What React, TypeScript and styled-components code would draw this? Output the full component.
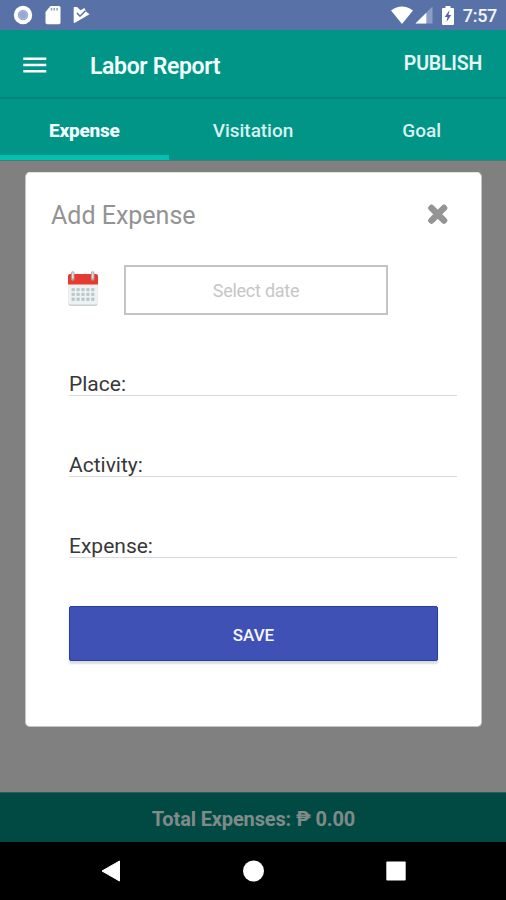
import React from "react";
import styled, { createGlobalStyle } from "styled-components";

const GlobalStyle = createGlobalStyle`
  * { box-sizing: border-box; }
  body { margin: 0; font-family: Roboto, "Liberation Sans", sans-serif; }
  button { font-family: inherit; border: 0; padding: 0; background: none; }
  svg { display: block; flex: none; }
`;

const Screen = styled.div`
  width: 506px;
  height: 900px;
  display: flex;
  flex-direction: column;
  overflow: hidden;
  background: #808080;
`;

const StatusBar = styled.header`
  height: 30px;
  flex: none;
  display: flex;
  justify-content: space-between;
  padding: 0 9px 0 13px;
  background: #5872a8;
`;

const StatusGroup = styled.div`
  display: flex;
  align-items: center;
`;

const NotificationIcons = styled(StatusGroup)`
  gap: 12px;
`;

const SystemIcons = styled(StatusGroup)`
  & > svg:nth-child(2) { margin-left: 2px; }
  & > svg:nth-child(3) { margin-left: 9px; }
`;

const Clock = styled.span`
  margin-left: 9px;
  padding-top: 2px;
  font-size: 18px;
  line-height: 30px;
  font-weight: 500;
  letter-spacing: -0.3px;
  color: #f4f6fb;
`;

const AppBar = styled.div`
  height: 69px;
  flex: none;
  display: flex;
  align-items: center;
  padding: 2px 24px 0 23px;
  background: #009587;
  border-bottom: 2px solid #00857a;
`;

const Title = styled.h1`
  margin: 4px 0 0 43px;
  flex: 1;
  font-size: 23px;
  line-height: 28px;
  font-weight: 600;
  letter-spacing: -0.35px;
  color: #f2fffd;
`;

const PublishButton = styled.button`
  margin-top: -1px;
  font-size: 19.5px;
  line-height: 24px;
  font-weight: 600;
  letter-spacing: -0.2px;
  color: #e4f6f3;
`;

const Tabs = styled.nav`
  height: 62px;
  flex: none;
  display: grid;
  grid-template-columns: repeat(3, 1fr);
  background: #009587;
  border-bottom: 1px solid #4c7a75;
`;

const Tab = styled.button<{ $active?: boolean }>`
  padding-top: 7px;
  border-bottom: 5px solid ${(p) => (p.$active ? "#00c2b3" : "transparent")};
  font-size: 19px;
  font-weight: ${(p) => (p.$active ? 800 : 500)};
  letter-spacing: ${(p) => (p.$active ? "-0.2px" : "-0.05px")};
  color: ${(p) => (p.$active ? "#f4fffe" : "#d9f1ee")};
`;

const Content = styled.main`
  flex: 1;
  padding: 11px 24px 0 25px;
`;

const Dialog = styled.section`
  height: 555px;
  border-radius: 5px;
  background: #fff;
  border: 1px solid #c4c4c4;
  border-top-color: #e4e4e4;
  padding: 0 24px 0 25px;
  display: flex;
  flex-direction: column;
`;

const DialogHeader = styled.div`
  display: flex;
  justify-content: space-between;
  align-items: center;
  height: 84px;
  padding-right: 8px;
`;

const DialogTitle = styled.h2`
  margin: 0;
  font-size: 25px;
  font-weight: 400;
  color: #939393;
`;

const DateRow = styled.div`
  display: flex;
  align-items: center;
  gap: 25px;
  margin: 8px 0 0 16px;

  & > svg { margin-bottom: 2px; }
`;

const DateInput = styled.button`
  width: 264px;
  height: 50px;
  border: 2px solid #c4c4c4;
  padding-top: 1px;
  font-size: 18px;
  letter-spacing: -0.25px;
  color: #c6c6c6;
`;

const Fields = styled.div`
  margin: 46px 0 0 18px;
`;

const Field = styled.label`
  display: flex;
  align-items: flex-end;
  height: 35px;
  margin-bottom: 46px;
  border-bottom: 1px solid #dadada;
  font-size: 21px;
  line-height: 22px;
  color: #383838;
`;

const SaveButton = styled.button`
  width: 369px;
  height: 55px;
  margin: 2px 0 0 18px;
  padding-top: 2px;
  border: 1px solid #2340a3;
  border-radius: 2px;
  background: #4051b5;
  box-shadow: 0 3px 2px rgba(0, 0, 0, 0.14);
  font-size: 17px;
  font-weight: 550;
  color: #f6f6ff;
`;

const TotalBar = styled.footer`
  height: 50px;
  flex: none;
  display: flex;
  align-items: center;
  justify-content: center;
  padding: 2px 0 0 1px;
  background: #004a43;
  border-top: 1px solid #2a5e58;
  font-size: 20px;
  font-weight: 700;
  letter-spacing: -0.14px;
  color: #808a89;
`;

const NavBar = styled.div`
  height: 58px;
  flex: none;
  display: flex;
  align-items: center;
  justify-content: space-between;
  padding: 0 100px 0 101px;
  background: #000;
`;

const RecordIcon = () => (
  <svg width="20" height="20" viewBox="0 0 20 20">
    <circle cx="10" cy="10" r="9.2" fill="#fff" />
    <circle cx="10" cy="10" r="5.2" fill="#98a8d3" />
    <circle cx="10" cy="10" r="4" fill="none" stroke="#a9b7dc" />
  </svg>
);

const SdCardIcon = () => (
  <svg width="16" height="20" viewBox="0 0 16 20">
    <path d="M5.5 1H14q1.5 0 1.5 1.5v15q0 1.7-1.5 1.7H2q-1.5 0-1.5-1.7V7z" fill="#fff" />
    <path d="M6.5 3v2.5M9.3 3v2.5M12.1 3v2.5" stroke="#8d9dc6" strokeWidth="1.5" />
  </svg>
);

const PlayCheckIcon = () => (
  <svg width="17" height="18" viewBox="0 0 17 18">
    <path d="M1 1h3l3.5 3.2L11.5 2l1.5 3.6 3.5 2.6L1.5 17Q.7 17 .7 16V1.5z" fill="#fff" />
    <path d="M4 7l3 3.2 5.5-5.4" fill="none" stroke="#5872a8" strokeWidth="1.6" />
  </svg>
);

const WifiIcon = () => (
  <svg width="22" height="18" viewBox="0 0 22 18">
    <path d="M0 4.4Q11-3.2 22 4.4L11 18z" fill="#fff" />
  </svg>
);

const SignalIcon = () => (
  <svg width="18" height="18" viewBox="0 0 18 18">
    <path d="M17.5.5v17H.5z" fill="#8c9ec6" />
    <path d="M11.3 6.7v10.8H.5z" fill="#fff" />
  </svg>
);

const BatteryIcon = () => (
  <svg width="12" height="19" viewBox="0 0 12 19">
    <path d="M3.5 0h5v2H11q1 0 1 1v15q0 1-1 1H1q-1 0-1-1V3q0-1 1-1h2.5z" fill="#fff" />
    <path d="M7.5 4L2.7 11h2.8l-1 5 4.8-7H6.5z" fill="#5265a0" />
  </svg>
);

const MenuIcon = () => (
  <svg width="24" height="18" viewBox="0 0 24 18">
    <path d="M.3 2.8h23M.3 9h23M.3 15.2h23" stroke="#fff" strokeWidth="2.6" />
  </svg>
);

const CloseIcon = () => (
  <svg width="22" height="22" viewBox="0 0 22 22">
    <path d="M4.5 4L17 16.500M17 4L4.500 16.500" stroke="#949494" strokeWidth="5" strokeLinecap="square" />
    <path d="M4.500 4L17 16.500M17 4L4.500 16.500" stroke="#949494" strokeWidth="6.400" strokeLinecap="round" />
  </svg>
);

const dotRows = [18.5, 23.3, 28.1];
const dotColumns = [5.5, 10.4, 15.3, 20.2, 25.1];

const CalendarIcon = () => (
  <svg width="32" height="36" viewBox="0 0 32 36">
    <path d="M1.5 12h29v21q0 2-2 2h-25q-2 0-2-2z" fill="#cbd0d2" />
    <path d="M1.5 12h29v19.5q0 2-2 2h-25q-2 0-2-2z" fill="#eff2f3" />
    <path d="M1 13.5V5q0-2 2-2h26q2 0 2 2v8.5z" fill="#e43c30" />
    <path d="M5.8 2v6M25.7 2v6" stroke="#b69ea0" strokeWidth="3.4" strokeLinecap="round" />
    <path d="M5.8 2v5M25.7 2v5" stroke="#dce0e2" strokeWidth="1.6" strokeLinecap="round" />
    {dotRows.map((y) =>
      dotColumns.map((x) => (
        <rect key={`${x}-${y}`} x={x - 1} y={y - 1.6} width="3.4" height="3.4" rx="1" fill="#bdc9ce" />
      ))
    )}
  </svg>
);

export default function App() {
  return (
    <>
      <GlobalStyle />
      <Screen>
        <StatusBar>
          <NotificationIcons>
            <RecordIcon />
            <SdCardIcon />
            <PlayCheckIcon />
          </NotificationIcons>
          <SystemIcons>
            <WifiIcon />
            <SignalIcon />
            <BatteryIcon />
            <Clock>7:57</Clock>
          </SystemIcons>
        </StatusBar>
        <AppBar>
          <MenuIcon />
          <Title>Labor Report</Title>
          <PublishButton>PUBLISH</PublishButton>
        </AppBar>
        <Tabs>
          <Tab $active>Expense</Tab>
          <Tab>Visitation</Tab>
          <Tab>Goal</Tab>
        </Tabs>
        <Content>
          <Dialog>
            <DialogHeader>
              <DialogTitle>Add Expense</DialogTitle>
              <CloseIcon />
            </DialogHeader>
            <DateRow>
              <CalendarIcon />
              <DateInput>Select date</DateInput>
            </DateRow>
            <Fields>
              <Field>Place:</Field>
              <Field>Activity:</Field>
              <Field>Expense:</Field>
            </Fields>
            <SaveButton>SAVE</SaveButton>
          </Dialog>
        </Content>
        <TotalBar>Total Expenses: ₱ 0.00</TotalBar>
        <NavBar>
          <svg width="20" height="22" viewBox="0 0 20 22">
            <path d="M18.5 1v20L1 11z" fill="#fff" stroke="#fff" strokeLinejoin="round" />
          </svg>
          <svg width="22" height="22" viewBox="0 0 22 22">
            <circle cx="10.5" cy="11" r="10.5" fill="#fff" />
          </svg>
          <svg width="20" height="20" viewBox="0 0 20 20">
            <rect x=".3" y=".5" width="19.4" height="19" rx="1" fill="#fff" />
          </svg>
        </NavBar>
      </Screen>
    </>
  );
}
